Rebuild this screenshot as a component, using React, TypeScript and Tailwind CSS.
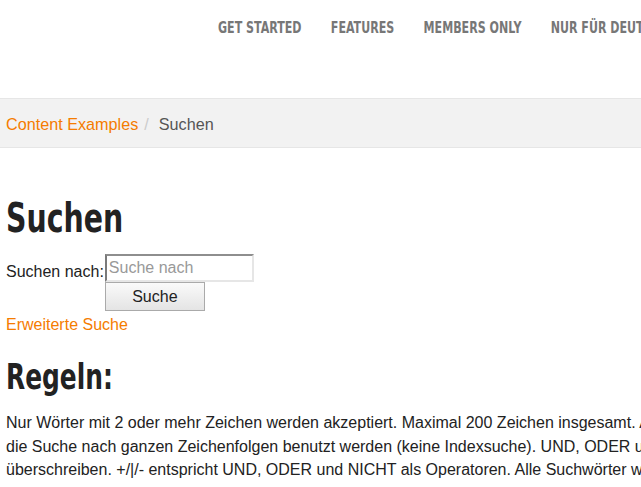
const cond = "font-['DejaVu_Sans_Condensed','DejaVu_Sans',sans-serif] [font-stretch:condensed] font-bold"

const navItems = ['Get started', 'Features', 'Members only', 'Nur für Deutsche']

export default function App() {
  return (
    <div className="w-[641px] h-[487px] overflow-hidden bg-white font-['Liberation_Sans',Arial,sans-serif] text-[#222]">
      <header className="h-[98px] flex items-start pl-[218px] pt-[18px]">
        <nav className="flex gap-[38px] whitespace-nowrap origin-left scale-x-[0.77]">
          {navItems.map((item) => (
            <a key={item} className={`${cond} uppercase text-[16px] leading-[20px] text-[#777]`}>
              {item}
            </a>
          ))}
        </nav>
      </header>

      <div className="h-[50px] bg-[#f2f2f2] border-y border-[#e6e6e6] flex items-center pt-[2px] px-[6px] text-[16.2px] whitespace-nowrap">
        <a className="text-[#f57c00]">Content Examples</a>
        <span className="text-[#ccc] pl-[6px] pr-[10px]">/</span>
        <span className="text-[#555]">Suchen</span>
      </div>

      <main className="px-[6px] pt-[46px] w-[900px]">
        <h1 className={`${cond} text-[41px] leading-[48px] inline-block origin-left scale-x-[0.77]`}>Suchen</h1>
        <form className="mt-[12px] flex items-start text-[16px]">
          <label className="pt-[6px] pr-[1px]">Suchen nach:</label>
          <div className="flex flex-col items-start">
            <input
              placeholder="Suche nach"
              className="w-[149px] h-[28px] px-[2px] border-2 border-[#8e8e8e] border-r-[#e6e6e6] border-b-[#e6e6e6] border-l-[#7a7a7a] text-[16px] placeholder:text-[#999] outline-none"
            />
            <button
              type="button"
              className="w-[100px] h-[29px] border border-[#aaa] bg-gradient-to-b from-[#fafafa] to-[#e4e4e4] text-[16px] text-[#222]"
            >
              Suche
            </button>
          </div>
        </form>
        <a className="block mt-[2px] text-[16px] text-[#f57c00]">Erweiterte Suche</a>

        <h2 className={`${cond} text-[35px] leading-[40px] mt-[20px] inline-block origin-left scale-x-[0.79]`}>Regeln:</h2>
        <p className="mt-[14px] text-[16px] leading-[23.5px] whitespace-nowrap">
          Nur Wörter mit 2 oder mehr Zeichen werden akzeptiert. Maximal 200 Zeichen insgesamt. Anführungszeichen können für
          <br />
          die Suche nach ganzen Zeichenfolgen benutzt werden (keine Indexsuche). UND, ODER und NICHT können als Operatoren die Standardsuche
          <br />
          überschreiben. +/|/- entspricht UND, ODER und NICHT als Operatoren. Alle Suchwörter werden in Kleinbuchstaben umgewandelt.
        </p>
      </main>
    </div>
  )
}
